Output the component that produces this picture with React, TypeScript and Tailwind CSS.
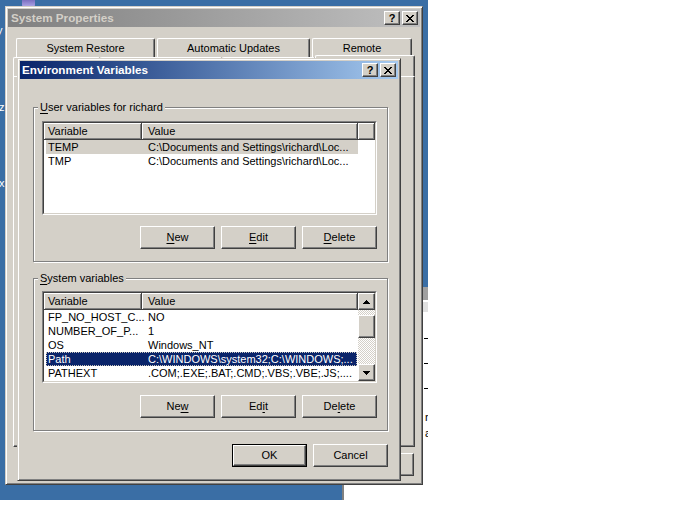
import React from "react";

const raised =
  "border border-t-white border-l-white border-r-[#404040] border-b-[#404040] shadow-[inset_-1px_-1px_0_#808080]";
const frame =
  "border border-t-[#d4d0c8] border-l-[#d4d0c8] border-r-[#404040] border-b-[#404040] shadow-[inset_1px_1px_0_#fff,inset_-1px_-1px_0_#808080] p-[2px]";
const headerCell =
  "flex items-center bg-[#d4d0c8] border-r border-b border-r-[#404040] border-b-[#404040] shadow-[inset_1px_1px_0_#fff,inset_-1px_-1px_0_#808080]";

function Label({ text, u }: { text: string; u: number }) {
  if (u < 0) return <span>{text}</span>;
  return (
    <span>
      {text.slice(0, u)}
      <span className="underline decoration-1 underline-offset-[2px]">{text[u]}</span>
      {text.slice(u + 1)}
    </span>
  );
}

function Button({ text, u = -1, def = false }: { text?: string; u?: number; def?: boolean }) {
  return (
    <div className={`h-[23px] w-[75px] shrink-0 ${def ? "border border-black" : ""}`}>
      <div className={`flex h-full w-full items-center justify-center bg-[#d4d0c8] ${raised}`}>
        {text && <Label text={text} u={u} />}
      </div>
    </div>
  );
}

function CloseGlyph() {
  return (
    <svg width="8" height="7" viewBox="0 0 8 7" shapeRendering="crispEdges">
      <path
        fill="#000"
        d="M0 0h2v1H0zM6 0h2v1H6zM1 1h2v1H1zM5 1h2v1H5zM2 2h4v1H2zM3 3h2v1H3zM2 4h4v1H2zM1 5h2v1H1zM5 5h2v1H5zM0 6h2v1H0zM6 6h2v1H6z"
      />
    </svg>
  );
}

function CapButton({ children }: { children: React.ReactNode }) {
  return (
    <div className={`flex h-[14px] w-[16px] items-center justify-center bg-[#d4d0c8] ${raised}`}>{children}</div>
  );
}

function TitleBar({ title, active }: { title: string; active: boolean }) {
  return (
    <div
      className={`flex h-[18px] shrink-0 items-center justify-between ${
        active
          ? "bg-linear-to-r from-[#0a246a] to-[#a6caf0] text-white"
          : "bg-linear-to-r from-[#808080] to-[#c0c0c0] text-[#d4d0c8]"
      }`}
    >
      <span className={`${active ? "pl-[2px]" : "pl-[3px]"} text-[11.7px] font-bold leading-[14px]`}>{title}</span>
      <div className="flex gap-[2px] pr-[2px]">
        <CapButton>
          <span className="text-[11px] font-bold leading-[10px] text-black">?</span>
        </CapButton>
        <CapButton>
          <CloseGlyph />
        </CapButton>
      </div>
    </div>
  );
}

function Tab({ text, w, selected = false }: { text?: string; w: string; selected?: boolean }) {
  return (
    <div
      className={`flex ${w} ${selected ? "-mt-[2px] h-[21px]" : "h-[19px]"} shrink-0 items-center justify-center rounded-t-[2px] border-t border-l border-r border-t-white border-l-white border-r-[#404040] bg-[#d4d0c8] shadow-[inset_-1px_0_0_#808080]`}
    >
      {text}
    </div>
  );
}

type Row = { name: string; value: string; sel?: "active" | "inactive" };

const userRows: Row[] = [
  { name: "TEMP", value: "C:\\Documents and Settings\\richard\\Loc...", sel: "inactive" },
  { name: "TMP", value: "C:\\Documents and Settings\\richard\\Loc..." },
];

const systemRows: Row[] = [
  { name: "FP_NO_HOST_C...", value: "NO" },
  { name: "NUMBER_OF_P...", value: "1" },
  { name: "OS", value: "Windows_NT" },
  { name: "Path", value: "C:\\WINDOWS\\system32;C:\\WINDOWS;...", sel: "active" },
  { name: "PATHEXT", value: ".COM;.EXE;.BAT;.CMD;.VBS;.VBE;.JS;...." },
];

function ListRow({ row, w }: { row: Row; w: string }) {
  const tone =
    row.sel === "active"
      ? "bg-[#0a246a] text-white outline-1 outline-dotted outline-[#c8c4bc] -outline-offset-1"
      : row.sel === "inactive"
        ? "bg-[#d4d0c8]"
        : "";
  return (
    <div className="flex h-[14px] shrink-0">
      <div className={`ml-[2px] flex h-full ${w} items-center whitespace-nowrap ${tone}`}>
        <span className="w-[96px] shrink-0 pl-[2px]">{row.name}</span>
        <span className="pl-[6px]">{row.value}</span>
      </div>
    </div>
  );
}

function Sunken({ h, children }: { h: string; children: React.ReactNode }) {
  return (
    <div className={`${h} w-[335px] border border-t-[#808080] border-l-[#808080] border-r-white border-b-white`}>
      <div className="h-full w-full overflow-hidden border border-t-[#404040] border-l-[#404040] border-r-[#d4d0c8] border-b-[#d4d0c8] bg-white">
        {children}
      </div>
    </div>
  );
}

function Header() {
  return (
    <>
      <div className={`h-[17px] w-[98px] shrink-0 pl-[4px] ${headerCell}`}>Variable</div>
      <div className={`h-[17px] w-[216px] shrink-0 pl-[6px] ${headerCell}`}>Value</div>
    </>
  );
}

function Arrow({ up }: { up: boolean }) {
  return (
    <svg width="7" height="4" viewBox="0 0 7 4" shapeRendering="crispEdges">
      <path fill="#000" d={up ? "M3 0h1v1h1v1h1v1h1v1H0V3h1V2h1V1h1z" : "M0 0h7v1H6v1H5v1H4v1H3V3H2V2H1V1H0z"} />
    </svg>
  );
}

function ScrollBar() {
  return (
    <div className="flex h-full w-[17px] shrink-0 flex-col bg-[repeating-conic-gradient(#d4d0c8_0%_25%,#ffffff_0%_50%)] bg-[length:2px_2px]">
      <div className={`flex h-[17px] shrink-0 items-center justify-center bg-[#d4d0c8] ${raised}`}>
        <Arrow up />
      </div>
      <div className="h-[5px] shrink-0" />
      <div className={`h-[23px] shrink-0 bg-[#d4d0c8] ${raised}`} />
      <div className="flex-1" />
      <div className={`flex h-[17px] shrink-0 items-center justify-center bg-[#d4d0c8] ${raised}`}>
        <Arrow up={false} />
      </div>
    </div>
  );
}

function Group({ title, u, children, className }: { title: string; u: number; children: React.ReactNode; className: string }) {
  return (
    <fieldset
      className={`w-[355px] border border-[#808080] pr-[10px] pl-[8px] shadow-[inset_1px_1px_0_#fff,1px_1px_0_#fff] ${className}`}
    >
      <legend className="-ml-[4px] bg-[#d4d0c8] px-[2px] leading-[13px]">
        <Label text={title} u={u} />
      </legend>
      {children}
    </fieldset>
  );
}

function EnvironmentVariables() {
  return (
    <div className={`absolute top-[58px] left-[17px] flex h-[423px] w-[384px] flex-col bg-[#d4d0c8] ${frame}`}>
      <TitleBar title="Environment Variables" active />
      <div className="flex flex-col pr-[10px] pl-[13px]">
        <Group title="User variables for richard" u={0} className="mt-[22px] pb-[12px]">
          <div className="mt-[7px]">
            <Sunken h="h-[94px]">
              <div className="flex">
                <Header />
                <div className={`h-[17px] flex-1 ${headerCell}`} />
              </div>
              {userRows.map((r) => (
                <ListRow key={r.name} row={r} w="w-[312px]" />
              ))}
            </Sunken>
          </div>
          <div className="mt-[11px] flex justify-end gap-[6px]">
            <Button text="New" u={0} />
            <Button text="Edit" u={0} />
            <Button text="Delete" u={0} />
          </div>
        </Group>

        <Group title="System variables" u={0} className="mt-[10px] pb-[12px]">
          <div className="mt-[6px]">
            <Sunken h="h-[92px]">
              <div className="flex h-full">
                <div className="flex flex-1 flex-col">
                  <div className="flex">
                    <Header />
                  </div>
                  {systemRows.map((r) => (
                    <ListRow key={r.name} row={r} w="w-[311px]" />
                  ))}
                </div>
                <ScrollBar />
              </div>
            </Sunken>
          </div>
          <div className="mt-[12px] flex justify-end gap-[6px]">
            <Button text="New" u={2} />
            <Button text="Edit" u={2} />
            <Button text="Delete" u={2} />
          </div>
        </Group>

        <div className="mt-[13px] flex w-[355px] justify-end gap-[6px]">
          <Button text="OK" def />
          <Button text="Cancel" />
        </div>
      </div>
    </div>
  );
}

function SystemProperties() {
  return (
    <div className={`absolute top-[6px] left-[5px] flex h-[479px] w-[418px] flex-col bg-[#d4d0c8] ${frame}`}>
      <TitleBar title="System Properties" active={false} />
      <div className="mt-[11px] ml-[8px] flex gap-[2px]">
        <Tab text="System Restore" w="w-[139px]" />
        <Tab text="Automatic Updates" w="w-[153px]" />
        <Tab text="Remote" w="w-[100px]" />
      </div>
      {/* second tab row and the bottom buttons sit under the child dialog */}
      <div className="ml-[5px] flex">
        <Tab w="w-[87px]" />
        <Tab w="w-[122px]" />
        <Tab w="w-[93px]" />
        <Tab w="w-[100px]" selected />
      </div>
      <div className={`mx-[5px] flex-1 bg-[#d4d0c8] ${raised}`} />
      <div className="mt-[6px] mb-[6px] flex justify-end gap-[6px] pr-[6px]">
        <Button def />
        <Button />
        <Button />
      </div>
    </div>
  );
}

function BackWindow() {
  return (
    <div className="absolute top-[287px] left-[342px] flex h-[240px] w-[100px] flex-col border-l-2 border-l-[#808080] bg-white">
      <div className="h-[13px] bg-[#a0a0a0]" />
      <div className="mt-[2px] h-[10px] bg-[#e0e0e0]" />
      <div className="mt-[26px] ml-[80px] flex flex-col gap-[24px]">
        <div className="h-px w-[6px] bg-black" />
        <div className="h-px w-[6px] bg-black" />
        <div className="h-px w-[6px] bg-black" />
      </div>
      <div className="mt-[20px] ml-[81px] text-[11px] leading-[16px] text-black">
        <div>r</div>
        <div>a</div>
      </div>
    </div>
  );
}

export default function App() {
  return (
    <div className="relative h-[525px] w-[700px] overflow-hidden bg-white font-['Liberation_Sans',Arial,sans-serif] text-[11px] leading-[13px] text-black">
      <div className="absolute top-0 left-0 h-[500px] w-[428px] overflow-hidden bg-[#3a6ea5]">
        <div className="absolute top-0 left-[22px] h-[7px] w-[13px] rounded-b-[2px] bg-linear-to-b from-[#7c6fc0] to-[#b0a8e8]" />
        <span className="absolute top-[24px] left-[-3px] text-[11px] text-white">y</span>
        <span className="absolute top-[101px] left-[-1px] text-[11px] text-white">z</span>
        <span className="absolute top-[177px] left-[-1px] text-[11px] text-white">x</span>
        <BackWindow />
        <SystemProperties />
        <EnvironmentVariables />
      </div>
    </div>
  );
}
